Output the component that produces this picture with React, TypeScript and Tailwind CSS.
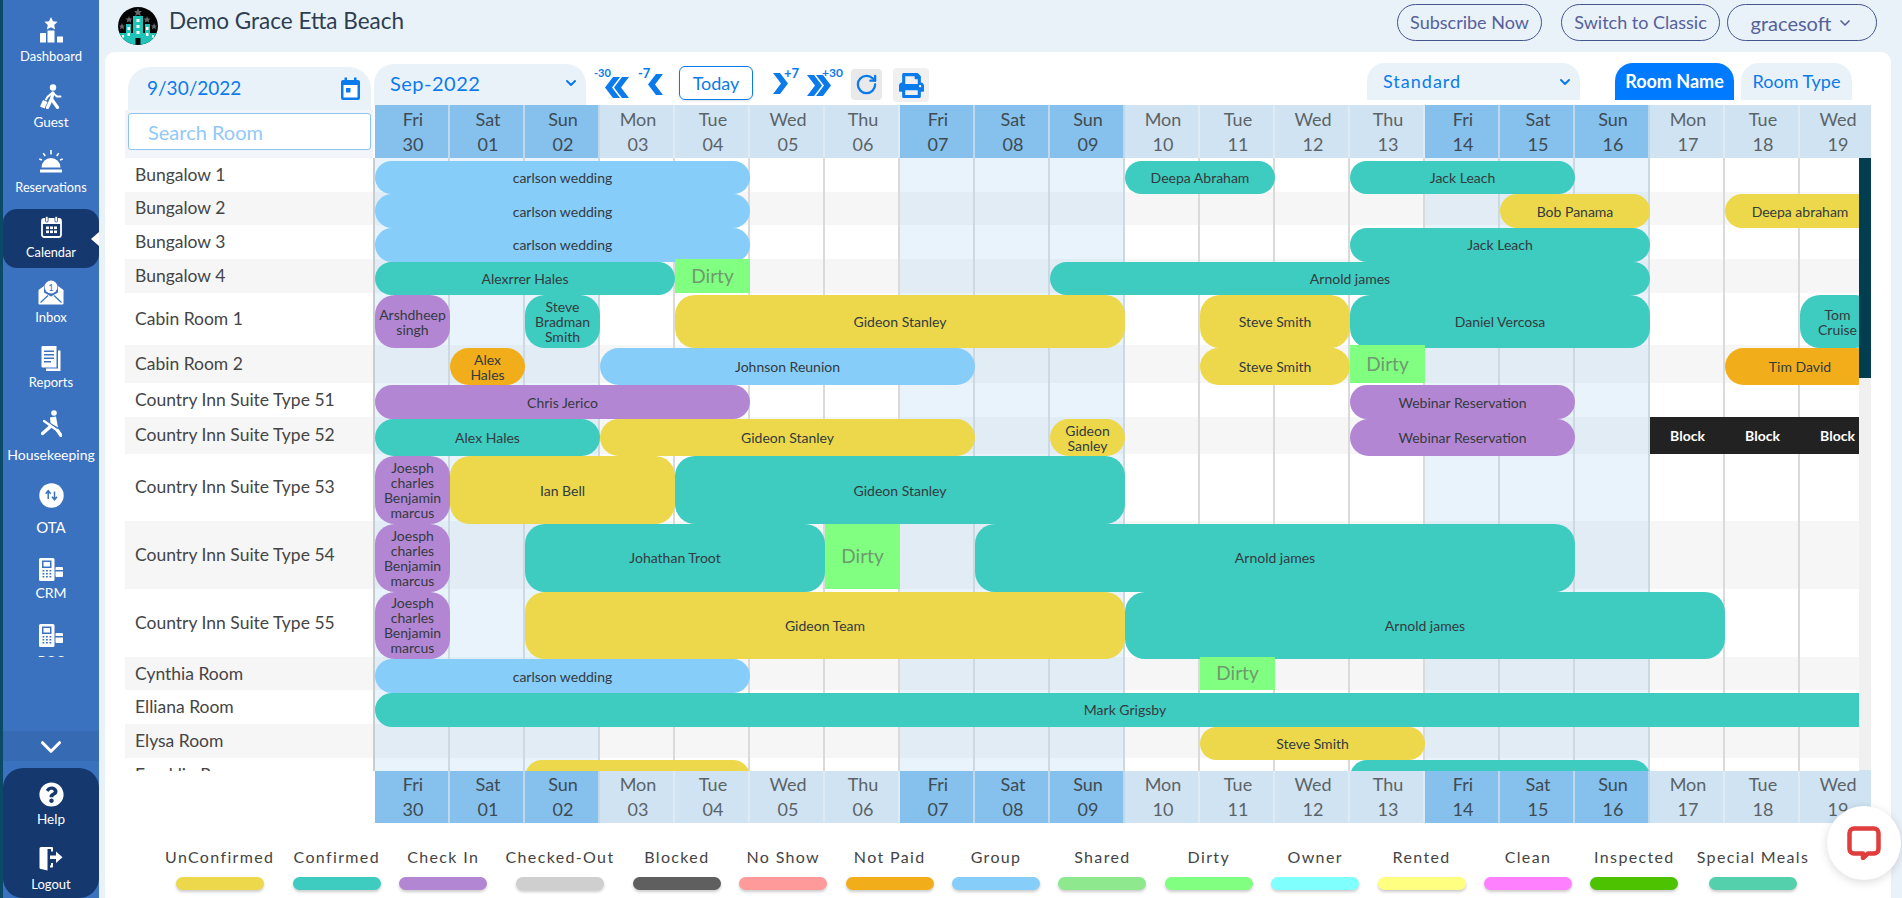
import { ChevronDown, RotateCw } from "lucide-react";
import { FaPrint, FaQuestionCircle } from "react-icons/fa";

const BLUE = "bg-[#87cdfa]";
const TEAL = "bg-[#3ecbc0]";
const YELLOW = "bg-[#ecd84a]";
const PURPLE = "bg-[#b386d3]";
const ORANGE = "bg-[#f2ae1a]";

type Bar = { c: number; n: number; t: string; k: string };

const days = [
  ["Fri", "30"], ["Sat", "01"], ["Sun", "02"], ["Mon", "03"], ["Tue", "04"],
  ["Wed", "05"], ["Thu", "06"], ["Fri", "07"], ["Sat", "08"], ["Sun", "09"],
  ["Mon", "10"], ["Tue", "11"], ["Wed", "12"], ["Thu", "13"], ["Fri", "14"],
  ["Sat", "15"], ["Sun", "16"], ["Mon", "17"], ["Tue", "18"], ["Wed", "19"],
];

const isWeekend = (i: number) => i <= 2 || (i >= 7 && i <= 9) || (i >= 14 && i <= 16);

const carlson = { c: 0, n: 5, t: "carlson wedding", k: BLUE };
const joesph = { c: 0, n: 1, t: "Joesph charles Benjamin marcus", k: PURPLE };

const rooms: { name: string; h: string; bars: Bar[]; dirty?: number; dirtyCls?: string; block?: boolean }[] = [
  {
    name: "Bungalow 1",
    h: "h-[33.7px]",
    bars: [carlson, { c: 10, n: 2, t: "Deepa Abraham", k: TEAL }, { c: 13, n: 3, t: "Jack Leach", k: TEAL }],
  },
  {
    name: "Bungalow 2",
    h: "h-[33.7px]",
    bars: [carlson, { c: 15, n: 2, t: "Bob Panama", k: YELLOW }, { c: 18, n: 2, t: "Deepa abraham", k: YELLOW }],
  },
  { name: "Bungalow 3", h: "h-[33.7px]", bars: [carlson, { c: 13, n: 4, t: "Jack Leach", k: TEAL }] },
  {
    name: "Bungalow 4",
    h: "h-[33.7px]",
    dirty: 4,
    bars: [{ c: 0, n: 4, t: "Alexrrer Hales", k: TEAL }, { c: 9, n: 8, t: "Arnold james", k: TEAL }],
  },
  {
    name: "Cabin Room 1",
    h: "h-[52.6px]",
    bars: [
      { c: 0, n: 1, t: "Arshdheep singh", k: PURPLE },
      { c: 2, n: 1, t: "Steve Bradman Smith", k: TEAL },
      { c: 4, n: 6, t: "Gideon Stanley", k: YELLOW },
      { c: 11, n: 2, t: "Steve Smith", k: YELLOW },
      { c: 13, n: 4, t: "Daniel Vercosa", k: TEAL },
      { c: 19, n: 1, t: "Tom\nCruise", k: TEAL },
    ],
  },
  {
    name: "Cabin Room 2",
    h: "h-[37.5px]",
    dirty: 13,
    bars: [
      { c: 1, n: 1, t: "Alex\nHales", k: ORANGE },
      { c: 3, n: 5, t: "Johnson Reunion", k: BLUE },
      { c: 11, n: 2, t: "Steve Smith", k: YELLOW },
      { c: 18, n: 2, t: "Tim David", k: ORANGE },
    ],
  },
  {
    name: "Country Inn Suite Type 51",
    h: "h-[33.7px]",
    bars: [{ c: 0, n: 5, t: "Chris Jerico", k: PURPLE }, { c: 13, n: 3, t: "Webinar Reservation", k: PURPLE }],
  },
  {
    name: "Country Inn Suite Type 52",
    h: "h-[37.2px]",
    block: true,
    bars: [
      { c: 0, n: 3, t: "Alex Hales", k: TEAL },
      { c: 3, n: 5, t: "Gideon Stanley", k: YELLOW },
      { c: 9, n: 1, t: "Gideon Sanley", k: YELLOW },
      { c: 13, n: 3, t: "Webinar Reservation", k: PURPLE },
    ],
  },
  {
    name: "Country Inn Suite Type 53",
    h: "h-[67.7px]",
    bars: [joesph, { c: 1, n: 3, t: "Ian Bell", k: YELLOW }, { c: 4, n: 6, t: "Gideon Stanley", k: TEAL }],
  },
  {
    name: "Country Inn Suite Type 54",
    h: "h-[67.7px]",
    dirty: 6,
    dirtyCls: "mb-[2.500px]",
    bars: [joesph, { c: 2, n: 4, t: "Johathan Troot", k: TEAL }, { c: 8, n: 8, t: "Arnold james", k: TEAL }],
  },
  {
    name: "Country Inn Suite Type 55",
    h: "h-[67.7px]",
    bars: [joesph, { c: 2, n: 8, t: "Gideon Team", k: YELLOW }, { c: 10, n: 8, t: "Arnold james", k: TEAL }],
  },
  { name: "Cynthia Room", h: "h-[33.7px]", dirty: 11, bars: [carlson] },
  { name: "Elliana Room", h: "h-[33.7px]", bars: [{ c: 0, n: 20, t: "Mark Grigsby", k: TEAL }] },
  { name: "Elysa Room", h: "h-[33.7px]", bars: [{ c: 11, n: 3, t: "Steve Smith", k: YELLOW }] },
  {
    name: "Franklin Room",
    h: "h-[33.7px]",
    bars: [{ c: 2, n: 3, t: "Gideon Stanley", k: YELLOW }, { c: 13, n: 4, t: "Jack Leach", k: TEAL }],
  },
];

const legend = [
  ["UnConfirmed", "bg-[#ecd84a]"],
  ["Confirmed", "bg-[#3ecbc0]"],
  ["Check In", "bg-[#b386d3]"],
  ["Checked-Out", "bg-[#cfcfcf]"],
  ["Blocked", "bg-[#5f5f5f]"],
  ["No Show", "bg-[#ff9a9a]"],
  ["Not Paid", "bg-[#f2ae1a]"],
  ["Group", "bg-[#87cdfa]"],
  ["Shared", "bg-[#8ee88e]"],
  ["Dirty", "bg-[#80ff80]"],
  ["Owner", "bg-[#80ffff]"],
  ["Rented", "bg-[#ffff80]"],
  ["Clean", "bg-[#ff80ff]"],
  ["Inspected", "bg-[#4cc200]"],
  ["Special Meals", "bg-[#55d0ac]"],
];

function DashboardIcon() {
  return (
    <svg width="25" height="26" viewBox="0 0 25 26" fill="white">
      <polygon points="12,0 14,4.2 18.6,4.8 15.2,8 16.1,12.6 12,10.3 7.9,12.6 8.8,8 5.4,4.8 10,4.2" />
      <rect x="1" y="16" width="6" height="9.5" rx="0.5" />
      <rect x="8.5" y="13.5" width="7" height="12" rx="0.5" />
      <rect x="18" y="19.5" width="6" height="6" rx="0.5" />
    </svg>
  );
}

function GuestIcon() {
  return (
    <svg width="22" height="25" viewBox="0 0 22 25" fill="none" stroke="white" strokeLinecap="round">
      <circle cx="13" cy="3.500" r="3.200" fill="white" stroke="none" />
      <path d="M13 9L11.500 15L7.500 23.500" strokeWidth="3.200" />
      <path d="M11.500 15L17.500 23.500" strokeWidth="3.200" />
      <path d="M13.500 9.500L17 12.500L20.500 12.500" strokeWidth="2" />
      <path d="M12 9L7.500 13L6 15.500" strokeWidth="2" />
      <polygon points="3,16 7.500,18 4.500,24.500 0,22.500" fill="white" stroke="none" />
    </svg>
  );
}

function BellIcon() {
  return (
    <svg width="24" height="24" viewBox="0 0 24 24" fill="white">
      <path d="M2.5 17.5a9.5 9.5 0 0 1 19 0z" />
      <rect x="1" y="19.5" width="22" height="3" rx="0.6" />
      <rect x="11.2" y="0" width="1.6" height="4.4" />
      <path d="M3.6 3.6l1.3-.9 2 2.8-1.3.9zM20.4 3.6l-1.3-.9-2 2.8 1.3.9zM0 9.8l.5-1.5 2.8 1-.5 1.5zM24 9.8l-.5-1.5-2.8 1 .5 1.5z" />
    </svg>
  );
}

function CalendarIcon() {
  return (
    <svg width="21" height="22" viewBox="0 0 21 22" fill="none">
      <rect x="1" y="3" width="19" height="18" rx="2.2" stroke="white" strokeWidth="1.8" />
      <rect x="1" y="3" width="19" height="5" fill="white" />
      <rect x="4.5" y="0.5" width="2.6" height="5.5" rx="1" fill="white" stroke="#15386f" strokeWidth="0.7" />
      <rect x="13.9" y="0.5" width="2.6" height="5.5" rx="1" fill="white" stroke="#15386f" strokeWidth="0.7" />
      <g fill="white">
        <rect x="5" y="10.5" width="3" height="2.6" />
        <rect x="9" y="10.5" width="3" height="2.6" />
        <rect x="13" y="10.5" width="3" height="2.6" />
        <rect x="5" y="14.5" width="3" height="2.6" />
        <rect x="9" y="14.5" width="3" height="2.6" />
        <rect x="13" y="14.5" width="3" height="2.6" />
      </g>
    </svg>
  );
}

function InboxIcon() {
  return (
    <svg width="26" height="25" viewBox="0 0 26 25" fill="white">
      <path d="M0.5 10L6 6v6.5l7 4 7-4V6l5.500 4v13.500a1 1 0 0 1-1 1H1.500a1 1 0 0 1-1-1z" />
      <path d="M2.500 22.500L10 15.500M23.500 22.500L16 15.500" stroke="#3b72c0" strokeWidth="1.2" />
      <circle cx="13" cy="7" r="6.5" />
      <text x="13" y="10.500" textAnchor="middle" fontSize="9.500" fill="#3b72c0" fontFamily="Lato">1</text>
    </svg>
  );
}

function ReportsIcon() {
  return (
    <svg width="20" height="25" viewBox="0 0 20 25" fill="white">
      <path d="M17 4.500h2.500V25H5v-2.500h12z" />
      <path d="M0.500 1a1 1 0 0 1 1-1H15.500v21.500h-14a1 1 0 0 1-1-1z" />
      <g fill="#3b72c0">
        <rect x="3" y="4.500" width="10" height="1.500" />
        <rect x="3" y="8" width="10" height="1.500" />
        <rect x="3" y="11.500" width="10" height="1.500" />
        <rect x="3" y="15" width="7" height="1.500" />
      </g>
    </svg>
  );
}

function BroomIcon() {
  return (
    <svg width="21" height="27" viewBox="0 0 21 27" fill="white">
      <circle cx="13" cy="3" r="2.800" />
      <polygon points="9,7.500 15,6.500 17,17.500 9.500,13" />
      <path d="M3 11L17 21" stroke="white" strokeWidth="2.200" strokeLinecap="round" />
      <path d="M16.500 20.500L20 25.500" stroke="white" strokeWidth="3.400" strokeLinecap="round" />
      <path d="M1.500 23.500L9.500 16.500" stroke="white" strokeWidth="3.400" strokeLinecap="round" />
    </svg>
  );
}

function OtaIcon() {
  return (
    <svg width="25" height="25" viewBox="0 0 25 25">
      <circle cx="12.500" cy="12.500" r="12.200" fill="white" />
      <path d="M9.200 16V8.500M6.700 10.700l2.500-3 2.500 3M15.500 8.500V16M13 13.800l2.500 3 2.500-3" fill="none" stroke="#3b72c0" strokeWidth="1.500" />
    </svg>
  );
}

function PosIcon() {
  return (
    <svg width="24" height="23" viewBox="0 0 24 23" fill="white">
      <path d="M1.500 0H14a1.500 1.500 0 0 1 1.500 1.500v20A1.500 1.500 0 0 1 14 23H1.500A1.500 1.500 0 0 1 0 21.500v-20A1.500 1.500 0 0 1 1.500 0z" />
      <rect x="3" y="2.500" width="9.500" height="7.500" fill="#3b72c0" />
      <rect x="4.500" y="4" width="6.500" height="4.500" fill="white" />
      <g fill="#3b72c0">
        <rect x="3.500" y="12" width="1.800" height="1.500" /><rect x="7" y="12" width="1.800" height="1.500" /><rect x="10.500" y="12" width="1.800" height="1.500" />
        <rect x="3.500" y="15" width="1.800" height="1.500" /><rect x="7" y="15" width="1.800" height="1.500" /><rect x="10.500" y="15" width="1.800" height="1.500" />
        <rect x="3.500" y="18" width="1.800" height="1.500" /><rect x="7" y="18" width="1.800" height="1.500" /><rect x="10.500" y="18" width="1.800" height="1.500" />
      </g>
      <path d="M17.500 9H23a1 1 0 0 1 1 1v2h-7.500v-2a1 1 0 0 1 1-1zM16.500 13.500H24V18a1 1 0 0 1-1 1h-5.500a1 1 0 0 1-1-1z" />
    </svg>
  );
}

function LogoutIcon() {
  return (
    <svg width="24" height="24" viewBox="0 0 24 24" fill="white">
      <path d="M0.500 1.500A1.500 1.500 0 0 1 2 0h11a1 1 0 0 1 1 1v3.500h-2V2H8.500v21.500L2 22a1.500 1.500 0 0 1-1.500-1.500z" />
      <path d="M12 16h2v3.500a1 1 0 0 1-1 1h-2v-2h1z" />
      <path d="M11 8.500h6V4.500l6.500 5.700L17 16v-4h-6z" />
    </svg>
  );
}

function Logo() {
  return (
    <svg width="40" height="38" viewBox="0 0 40 38">
      <defs>
        <clipPath id="logo-clip">
          <ellipse cx="20" cy="19" rx="20" ry="19" />
        </clipPath>
      </defs>
      <ellipse cx="20" cy="19" rx="20" ry="19" fill="#050505" />
      <g fill="#63656a">
        <polygon points="20,1 21.300,4 24,4 22,6 22.800,9 20,7.400 17.200,9 18,6 16,4 18.700,4" />
        <polygon points="11,9 12,11.500 14.500,11.500 12.700,13.200 13.300,15.500 11,14.200 8.700,15.500 9.300,13.200 7.500,11.500 10,11.500" />
        <polygon points="29,9 30,11.500 32.500,11.500 30.700,13.200 31.300,15.500 29,14.200 26.700,15.500 27.300,13.200 25.500,11.500 28,11.500" />
        <polygon points="4,16 5,18.500 7,18.500 5.500,20 6,22.500 4,21 2,22.500 2.500,20 1,18.500 3,18.500" />
        <polygon points="36,16 37,18.500 39,18.500 37.500,20 38,22.500 36,21 34,22.500 34.500,20 33,18.500 35,18.500" />
      </g>
      <g clipPath="url(#logo-clip)">
        <path d="M0 38V26h8V17h5V26h2V9h10v17h2V17h5v9h8v12z" fill="#1ec4b8" />
        <g fill="white">
          <rect x="18.500" y="12" width="3" height="3" /><rect x="18.500" y="18" width="3" height="3" /><rect x="18.500" y="24" width="3" height="3" />
          <rect x="9.500" y="20" width="2.500" height="3" /><rect x="9.500" y="26" width="2.500" height="3" />
          <rect x="28" y="20" width="2.500" height="3" /><rect x="28" y="26" width="2.500" height="3" />
          <rect x="4" y="28" width="2" height="2.500" /><rect x="34" y="28" width="2" height="2.500" />
        </g>
        <rect x="17.500" y="31" width="5" height="7" fill="#050505" />
      </g>
    </svg>
  );
}

const ChevL = "15,0 8,0 0,10.500 8,21 15,21 7,10.500";

function Jump({ text, double, right }: { text: string; double?: boolean; right?: boolean }) {
  return (
    <svg width={double ? 24 : 15} height="21" viewBox={double ? "0 0 24 21" : "0 0 15 21"} fill="#0b7bec" className={right ? "-scale-x-100" : ""} aria-label={text}>
      <polygon points={ChevL} />
      {double && <polygon points={ChevL} transform="translate(9 0)" />}
    </svg>
  );
}

const navItems = [
  { label: "Dashboard", icon: <DashboardIcon />, item: "h-[66px]", text: "text-[13px] mt-[1.500px]" },
  { label: "Guest", icon: <GuestIcon />, item: "h-[66px]", text: "text-[13.500px] mt-[1.500px]" },
  { label: "Reservations", icon: <BellIcon />, item: "h-[65px]", text: "text-[12.700px] mt-[1px]" },
  { label: "Calendar", icon: <CalendarIcon />, item: "h-[65px]", text: "text-[12.800px] mt-[1px]", active: true },
  { label: "Inbox", icon: <InboxIcon />, item: "h-[66px]", text: "text-[13px] mt-[1px]" },
  { label: "Reports", icon: <ReportsIcon />, item: "h-[65px]", text: "text-[13px] mt-[0px]" },
  { label: "Housekeeping", icon: <BroomIcon />, item: "h-[72px]", text: "text-[14px] mt-[8px]" },
  { label: "OTA", icon: <OtaIcon />, item: "h-[74px]", text: "text-[15px] mt-[8px]" },
  { label: "CRM", icon: <PosIcon />, item: "h-[66px]", text: "text-[14px] mt-[0px]" },
  { label: "POS", icon: <PosIcon />, item: "h-[66px]", text: "text-[14px] mt-[1.500px]" },
];

function Sidebar() {
  return (
    <aside className="w-[99px] h-[898px] shrink-0 bg-[#3b72c0] border-l-[3px] border-[#0a4a66] flex flex-col text-white">
      <nav className="h-[642px] mt-[15px] overflow-hidden">
        {navItems.map((n) => (
          <div key={n.label} className={`relative flex flex-col items-center ${n.item}`}>
            {n.active && (
              <div className="absolute inset-x-0 -top-[3px] h-[59px] bg-[#15386f] rounded-[14px]">
                <span className="absolute right-0 top-[23px] border-y-[7px] border-r-[8px] border-y-transparent border-r-white" />
              </div>
            )}
            <div className="relative h-[30px] flex items-center justify-center">{n.icon}</div>
            <div className={`relative leading-[18px] ${n.text}`}>{n.label}</div>
          </div>
        ))}
      </nav>
      <div className="mt-[74px] h-[30px] pt-[2px] bg-[#366bb3] flex items-center justify-center">
        <ChevronDown size={34} strokeWidth={2.2} />
      </div>
      <div className="mt-[7px] flex-1 bg-[#15386f] rounded-[20px] flex flex-col items-center pt-[14px]">
        <FaQuestionCircle size={25} />
        <div className="text-[13.500px] leading-[18px] mt-[3px]">Help</div>
        <div className="mt-[19px]"><LogoutIcon /></div>
        <div className="text-[13px] leading-[18px] mt-[4px]">Logout</div>
      </div>
    </aside>
  );
}

function DayHeader() {
  return (
    <div className="flex w-[1496px] h-[53px] overflow-hidden">
      {days.map(([d, n], i) => (
        <div
          key={i}
          className={`w-[75px] shrink-0 pl-[3px] flex flex-col items-center justify-center border-r-2 text-[18px] leading-[25px] ${
            isWeekend(i) ? "bg-[#85c1ec] border-[#c0d8ec] text-[#3f4a52]" : "bg-[#cfe3f3] border-[#dfeaf3] text-[#5c6367]"
          }`}
        >
          <span>{d}</span>
          <span>{n}</span>
        </div>
      ))}
    </div>
  );
}

function Cal() {
  return (
    <svg width="21" height="24" viewBox="0 0 21 24" fill="#0b7bec">
      <rect x="1" y="3" width="19" height="20" rx="2" />
      <rect x="3.500" y="8" width="14" height="12.500" fill="white" />
      <rect x="6" y="11" width="4.500" height="4.500" />
      <rect x="4.500" y="0.500" width="2.500" height="4" />
      <rect x="14" y="0.500" width="2.500" height="4" />
    </svg>
  );
}

function Toolbar() {
  return (
    <div className="relative h-[53px] flex items-start">
      <div className="w-[212px] h-[41px] mt-[12px] -ml-[1px] pb-[4px] rounded-t-[20px] bg-[#eaf2f9] flex items-center justify-between pl-[16px] pr-[7px] text-[#0b7bec] text-[20px] tracking-[0.5px]">
        Sep-2022
        <ChevronDown size={16} strokeWidth={3} />
      </div>
      <div className="relative ml-[19px] mt-[25px] flex items-start">
        <span className="absolute -left-[11px] -top-[11px] text-[11px] font-bold text-[#0b7bec] leading-[14px]">-30</span>
        <Jump text="-30" double />
      </div>
      <div className="relative ml-[19px] mt-[22px]">
        <span className="absolute -left-[10px] -top-[8px] text-[13px] font-bold text-[#0b7bec] leading-[14px]">-7</span>
        <Jump text="-7" />
      </div>
      <button className="ml-[16px] mt-[14px] w-[74px] h-[34px] rounded-[6px] border border-[#0b7bec] shadow-sm text-[#0b7bec] text-[18px]">
        Today
      </button>
      <div className="relative ml-[20px] mt-[21px]">
        <Jump text="+7" right />
        <span className="absolute left-[11px] -top-[7px] text-[13px] font-bold text-[#0b7bec] leading-[14px]">+7</span>
      </div>
      <div className="relative ml-[19px] mt-[23px]">
        <Jump text="+30" double right />
        <span className="absolute left-[15px] -top-[9px] text-[12px] font-bold text-[#0b7bec] leading-[14px]">+30</span>
      </div>
      <div className="ml-[20px] mt-[17px] w-[31px] h-[31px] bg-[#e9e9e9] rounded-[4px] flex items-center justify-center">
        <RotateCw size={23} color="#0b7bec" strokeWidth={2.4} />
      </div>
      <div className="ml-[11px] mt-[16px] w-[36px] h-[34px] bg-[#f0f0f0] rounded-[4px] flex items-center justify-center">
        <FaPrint size={25} color="#0b7bec" />
      </div>
      <div className="ml-[438px] mt-[11px] w-[213px] h-[37px] rounded-t-[18px] bg-[#eaf2f9] flex items-center justify-between pl-[16px] pr-[7px] text-[#0b7bec] text-[18px] tracking-[1px]">
        Standard
        <ChevronDown size={16} strokeWidth={3} />
      </div>
      <div className="ml-[35px] mt-[11px] w-[119px] h-[37px] rounded-t-[18px] bg-[#007bff] text-white font-bold text-[18px] flex items-center justify-center">
        Room Name
      </div>
      <div className="ml-[7px] mt-[11px] w-[111px] h-[37px] rounded-t-[18px] bg-[#eaf2f9] text-[#0b7bec] text-[18px] flex items-center justify-center">
        Room Type
      </div>
    </div>
  );
}

function Row({ room, idx }: { room: (typeof rooms)[number]; idx: number }) {
  const gray = idx % 2 === 1;
  return (
    <div className={`relative w-[1500px] flex ${room.h} ${gray ? "bg-[#f6f6f6]" : "bg-white"}`}>
      {days.map((_, i) => (
        <div
          key={i}
          className={`w-[75px] shrink-0 border-r-2 ${
            isWeekend(i)
              ? `border-[#ccd8e2] ${gray ? "bg-[#e2ecf5]" : "bg-[#e8f3fc]"}`
              : "border-[#dadada]"
          }`}
        />
      ))}
      <div className="absolute inset-x-0 top-[2.500px] -bottom-[2.500px] grid grid-cols-[repeat(20,75px)] grid-rows-[100%] z-10">
        {room.bars.map((b) => (
          <div
            key={b.c}
            className={`${b.k} rounded-[20px] flex items-center justify-center text-center whitespace-pre-line px-[3px] text-[14px] leading-[15px] text-[#333b3f]`}
            style={{ gridColumn: `${b.c + 1} / span ${b.n}`, gridRow: 1 }}
          >
            {b.t}
          </div>
        ))}
        {room.dirty !== undefined && (
          <div
            className={`${room.dirtyCls ?? "-mt-[2.500px] mb-[2.500px]"} bg-[#80ff80] flex items-center justify-center text-[19px] text-[#6f9a6f]`}
            style={{ gridColumn: room.dirty + 1, gridRow: 1 }}
          >
            Dirty
          </div>
        )}
        {room.block && (
          <div
            className="-mt-[2.500px] mb-[2.500px] bg-[#222222] grid grid-cols-3 text-white font-bold text-[14px] items-center text-center"
            style={{ gridColumn: "18 / span 3", gridRow: 1 }}
          >
            <span>Block</span>
            <span>Block</span>
            <span>Block</span>
          </div>
        )}
      </div>
    </div>
  );
}

export default function App() {
  return (
    <div className="w-[1902px] h-[898px] flex overflow-hidden bg-[#eaf2f9] font-['Lato',sans-serif] text-[#444]">
      <Sidebar />
      <main className="flex-1 flex flex-col min-w-0">
        <header className="h-[52px] shrink-0 flex items-center pl-[19px] pr-[25px]">
          <Logo />
          <h1 className="ml-[11px] -mt-[11px] text-[22.500px] text-[#2d3e50]">Demo Grace Etta Beach</h1>
          <div className="ml-auto -mt-[7px] flex text-[18px] text-[#55619a]">
            <button className="w-[145px] h-[37px] rounded-full border border-[#45558f]">Subscribe Now</button>
            <button className="ml-[19px] w-[159px] h-[37px] rounded-full border border-[#45558f]">Switch to Classic</button>
            <button className="ml-[7px] w-[150px] h-[37px] rounded-full border border-[#45558f] flex items-center justify-center gap-[6px] text-[20px]">
              gracesoft
              <ChevronDown size={16} strokeWidth={2.5} />
            </button>
          </div>
        </header>

        <section className="flex-1 ml-[6px] mr-[11px] bg-white rounded-t-[10px] pl-[20px] flex flex-col min-h-0">
          <div className="flex h-[106px] shrink-0">
            <div className="w-[250px] shrink-0 flex flex-col">
              <div className="ml-[3px] mt-[15px] w-[243px] h-[43px] rounded-t-[22px] bg-[#eaf2f9] flex items-center justify-between pl-[19px] pr-[10px] text-[#0b7bec] text-[19px]">
                9/30/2022
                <Cal />
              </div>
              <div className="h-[48px] w-[248px] bg-[#f1f5f9] pt-[3px] pl-[3px]">
                <input
                  placeholder="Search Room"
                  className="w-[243px] h-[37px] bg-white border border-[#8cc4ee] rounded-[3px] pl-[19px] text-[20px] placeholder:text-[#93c9f8] outline-none"
                />
              </div>
            </div>
            <div className="flex-1 flex flex-col min-w-0">
              <Toolbar />
              <DayHeader />
            </div>
          </div>

          <div className="flex h-[613px] shrink-0 overflow-hidden">
            <div className="w-[248px] shrink-0">
              {rooms.map((r, i) => (
                <div
                  key={r.name}
                  className={`${r.h} flex items-center pl-[10px] text-[17.500px] text-[#454545] ${i % 2 === 1 ? "bg-[#f6f6f6]" : ""}`}
                >
                  {r.name}
                </div>
              ))}
            </div>
            <div className="w-[1486px] shrink-0 border-l-2 border-[#c8cdd2] overflow-hidden">
              {rooms.map((r, i) => (
                <Row key={r.name} room={r} idx={i} />
              ))}
            </div>
            <div className="w-[12px] shrink-0 bg-[#f0f0f0]">
              <div className="h-[220px] bg-[#033d50]" />
            </div>
          </div>

          <div className="ml-[250px] shrink-0 -mt-[1px]">
            <DayHeader />
          </div>

          <div className="ml-[40px] mt-[24px] flex gap-[18.400px]">
            {legend.map(([t, c]) => (
              <div key={t} className="min-w-[88px] flex flex-col items-center">
                <span className="text-[16px] leading-[20px] tracking-[1.350px] text-[#444] whitespace-nowrap">{t}</span>
                <span className={`mt-[10px] w-[88px] h-[13px] rounded-full shadow-[0_2px_3px_rgba(0,0,0,0.2)] ${c}`} />
              </div>
            ))}
          </div>
        </section>
      </main>

      <div className="fixed left-[1827px] top-[806px] w-[74px] h-[74px] rounded-full bg-white shadow-[0_2px_10px_rgba(0,0,0,0.15)] flex items-center justify-center">
        <svg width="34" height="34" viewBox="0 0 34 34" fill="none">
          <path
            d="M7 2.500h20a4.500 4.500 0 0 1 4.500 4.500v16a4.500 4.500 0 0 1-4.500 4.500h-6l-5 4.500v-4.500H7A4.500 4.500 0 0 1 2.500 23V7A4.500 4.500 0 0 1 7 2.500z"
            stroke="#e03d3d"
            strokeWidth="4.500"
            strokeLinejoin="round"
          />
        </svg>
      </div>
    </div>
  );
}
